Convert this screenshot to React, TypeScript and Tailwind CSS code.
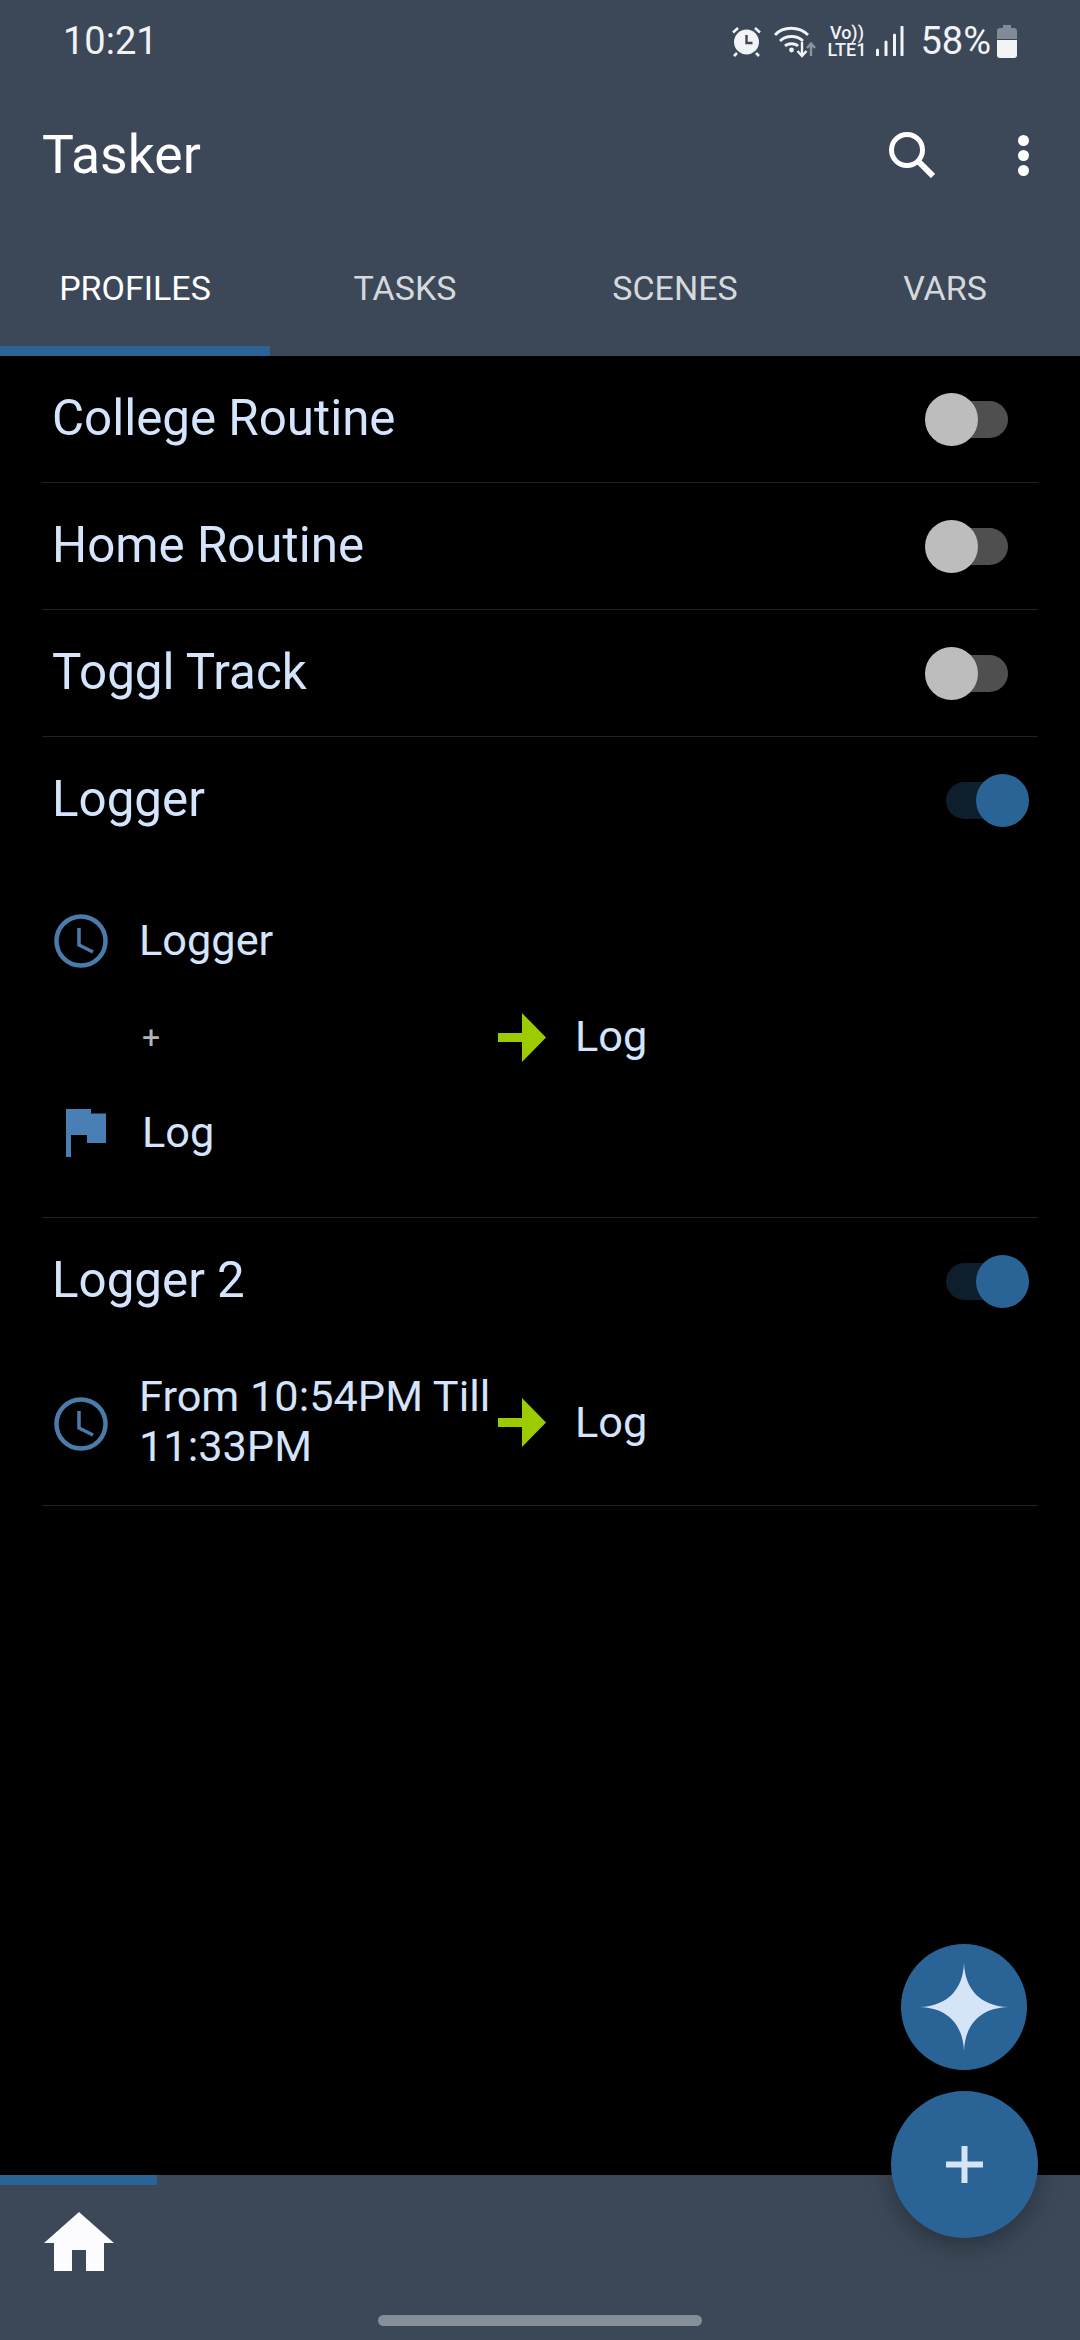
import React from 'react'

const tabs = ['PROFILES', 'TASKS', 'SCENES', 'VARS']

function StatusIcons() {
  return (
    <div className="flex items-center h-full">
      {/* alarm */}
      <svg className="w-[31px] h-[31px] mr-[12px]" viewBox="0 0 31 31">
        <circle cx="15.5" cy="16" r="12.5" fill="#f1f3f5" />
        <path d="M15.5 9v8h6" fill="none" stroke="#3c4858" strokeWidth="2.4" />
        <path d="M2 6.5 7 2M29 6.5 24 2M6 27l-3 3M25 27l3 3" stroke="#f1f3f5" strokeWidth="2.6" fill="none" />
      </svg>
      {/* wifi */}
      <svg className="w-[44px] h-[33px] mr-[9px]" viewBox="0 0 44 33">
        <path d="M1 10C9 1 25 1 34 10M6 16c6-6 17-6 23 0M11 21c3-3 10-3 13 0" fill="none" stroke="#f1f3f5" strokeWidth="2.8" />
        <circle cx="17.5" cy="25" r="2.4" fill="#f1f3f5" />
        <path d="M28 17v14M23.5 26l4.500 5 4.500-5" fill="none" stroke="#f1f3f5" strokeWidth="2.400" />
        <path d="M37 31V19M33 23l4-4.500 4 4.500" fill="none" stroke="#8b939d" strokeWidth="2.400" />
      </svg>
      <div className="flex flex-col items-center w-[39px] mr-[9px] text-[#f1f3f5] font-medium leading-none">
        <span className="text-[18px] h-[17px] leading-[17px]">Vo))</span>
        <span className="text-[18px] leading-[17px]">LTE1</span>
      </div>
      {/* signal */}
      <svg className="w-[29px] h-[30px] mr-[16px]" viewBox="0 0 29 30">
        <path d="M2.500 24v5M11 16v13M19.500 9v20M27 1v28" stroke="#f1f3f5" strokeWidth="3" strokeLinecap="round" fill="none" />
      </svg>
      <span className="text-[38px] text-[#f1f3f5] leading-none mr-[5px]">58%</span>
      {/* battery */}
      <svg className="w-[22px] h-[34px]" viewBox="0 0 22 34">
        <path d="M7 1h8v3h3a3 3 0 0 1 3 3v8H1V7a3 3 0 0 1 3-3h3z" fill="#818a95" />
        <path d="M1 16h20v15a3 3 0 0 1-3 3H4a3 3 0 0 1-3-3z" fill="#f1f3f5" />
      </svg>
    </div>
  )
}

function ProfileSwitch({ on }: { on: boolean }) {
  return (
    <div className={`relative w-[62px] h-[37px] rounded-full mr-[30px] ${on ? 'bg-[#0f1e2d]' : 'bg-[#4f4f4f]'}`}>
      <div
        className={`absolute top-[-8px] w-[53px] h-[53px] rounded-full ${
          on ? 'right-[-21px] bg-[#2a6496]' : 'left-[-21px] bg-[#bdbdbd]'
        }`}
      />
    </div>
  )
}

function ProfileRow({ name, on }: { name: string; on: boolean }) {
  return (
    <div className="h-[126px] flex items-center justify-between pl-[10px]">
      <span className="text-[49.300px] text-[#d3e4fc] leading-none">{name}</span>
      <ProfileSwitch on={on} />
    </div>
  )
}

function ClockIcon() {
  return (
    <svg className="w-[54px] h-[54px] ml-[12px] shrink-0" viewBox="0 0 54 54">
      <circle cx="27" cy="27" r="24.500" fill="none" stroke="#4a7cab" strokeWidth="4.500" />
      <path d="M25 14v17l14 7" fill="none" stroke="#4a7cab" strokeWidth="3.500" />
    </svg>
  )
}

function ArrowIcon() {
  return (
    <svg className="w-[48px] h-[49px] shrink-0" viewBox="0 0 48 49">
      <polygon points="0,20 24,20 24,0 48,24.5 24,49 24,29 0,29" fill="#9ccb00" />
    </svg>
  )
}

function FlagIcon() {
  return (
    <svg className="w-[40px] h-[48px] ml-[24px] shrink-0" viewBox="0 0 40 48">
      <path d="M0 0h25v4.500h15V34H21v-8H5v22H0z" fill="#4a7fb5" />
    </svg>
  )
}

export default function App() {
  return (
    <div className="relative w-[1080px] h-[2340px] bg-black flex flex-col overflow-hidden font-['Roboto',sans-serif]">
      <header className="bg-[#3c4858] h-[356px] shrink-0 flex flex-col">
        <div className="h-[82px] flex items-center justify-between pl-[63px] pr-[62px]">
          <span className="text-[38px] text-[#f1f3f5] leading-none">10:21</span>
          <StatusIcons />
        </div>
        <div className="h-[144px] flex items-center justify-between pl-[42px] pt-[2px]">
          <span className="text-[53.500px] text-white leading-none">Tasker</span>
          <div className="flex items-center">
            <svg className="w-[46px] h-[46px] mr-[83px]" viewBox="0 0 46 46">
              <circle cx="18" cy="18" r="15.500" fill="none" stroke="#fff" strokeWidth="5" />
              <path d="M29 29l15 15" stroke="#fff" strokeWidth="6" fill="none" />
            </svg>
            <div className="flex flex-col gap-[4px] mr-[51px]">
              <div className="w-[11px] h-[11px] rounded-full bg-white" />
              <div className="w-[11px] h-[11px] rounded-full bg-white" />
              <div className="w-[11px] h-[11px] rounded-full bg-white" />
            </div>
          </div>
        </div>
        <div className="flex-1 grid grid-cols-4">
          {tabs.map((t, i) => (
            <div key={t} className="flex flex-col">
              <div className={`flex-1 flex items-center justify-center pt-[4px] text-[34px] leading-none ${i === 0 ? 'text-white' : 'text-[#d5d8dc]'}`}>
                {t}
              </div>
              <div className={`h-[10px] ${i === 0 ? 'bg-[#2a6496]' : ''}`} />
            </div>
          ))}
        </div>
      </header>

      <main className="flex-1 px-[42px]">
        <div className="border-b border-[#222]"><ProfileRow name="College Routine" on={false} /></div>
        <div className="border-b border-[#222]"><ProfileRow name="Home Routine" on={false} /></div>
        <div className="border-b border-[#222]"><ProfileRow name="Toggl Track" on={false} /></div>
        <div className="border-b border-[#222] h-[481px]">
          <ProfileRow name="Logger" on />
          <div className="pt-[30px] text-[43.300px] text-[#d3e4fc] leading-none">
            <div className="h-[96px] flex items-center">
              <ClockIcon />
              <span className="ml-[31px]">Logger</span>
            </div>
            <div className="h-[96px] flex items-center">
              <span className="ml-[100px] w-[356px] text-[32px] text-[#b5b5b5]">+</span>
              <ArrowIcon />
              <span className="ml-[29px]">Log</span>
            </div>
            <div className="h-[96px] flex items-center">
              <FlagIcon />
              <span className="ml-[36px]">Log</span>
            </div>
          </div>
        </div>
        <div className="border-b border-[#222] h-[288px]">
          <ProfileRow name="Logger 2" on />
          <div className="h-[160px] flex items-center text-[43.300px] text-[#d3e4fc]">
            <ClockIcon />
            <span className="ml-[31px] w-[359px] shrink-0 leading-[50px] mb-[5px]">From 10:54PM Till 11:33PM</span>
            <div className="mb-[4px] shrink-0"><ArrowIcon /></div>
            <span className="ml-[29px] leading-none mb-[3px]">Log</span>
          </div>
        </div>
      </main>

      <footer className="relative bg-[#3c4858] h-[165px] shrink-0">
        <div className="h-[10px] w-[157px] bg-[#2a6496]" />
        <svg className="w-[70px] h-[59px] ml-[44px] mt-[27px]" viewBox="0 0 70 59">
          <path d="M35 0l35 31H60v28H42V38H28v21H10V31H0z" fill="#fcfcff" />
        </svg>
        <div className="absolute left-[378px] top-[140px] w-[324px] h-[11px] rounded-full bg-[#858e99]" />
      </footer>

      {/* floating buttons */}
      <button className="absolute left-[901px] top-[1944px] w-[126px] h-[126px] rounded-full bg-[#2a6496] flex items-center justify-center">
        <svg className="w-[88px] h-[88px]" viewBox="0 0 88 88">
          <path d="M44 0C45 26 60 43 88 44C60 45 45 62 44 88C43 62 28 45 0 44C28 43 43 26 44 0Z" fill="#d6e4f7" />
        </svg>
      </button>
      <button className="absolute left-[891px] top-[2091px] w-[147px] h-[147px] rounded-full bg-[#2a6496] shadow-[0_8px_24px_rgba(0,0,0,0.3)] flex items-center justify-center">
        <svg className="w-[37px] h-[37px]" viewBox="0 0 37 37">
          <path d="M15.500 0h6v15.500H37v6H21.500V37h-6V21.500H0v-6h15.500z" fill="#d6e4f7" />
        </svg>
      </button>
    </div>
  )
}
